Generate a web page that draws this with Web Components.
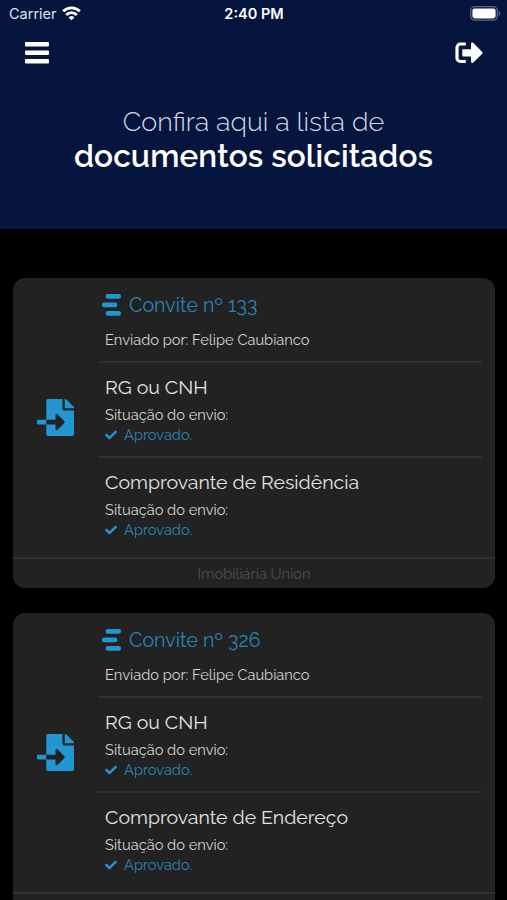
<!DOCTYPE html>
<html lang="pt-BR">
<head>
<meta charset="utf-8">
<meta name="viewport" content="width=device-width, initial-scale=1">
<title>Documentos solicitados</title>
<style>
    html, body{
        margin: 0;
        height: 900px;
        overflow: hidden;
        background-color: #000;
        font-family: Raleway, Lato, "Open Sans", sans-serif;
    }
</style>
</head>
<body>
    <app-tela>
        <barra-status slot="topo" hora="2:40 PM">Carrier</barra-status>
        <header-app slot="topo">
            Confira aqui a lista de
            <span slot="destaque">documentos solicitados</span>
        </header-app>

        <card-convite numero="133" remetente="Felipe Caubianco">
            <item-documento situacao="Aprovado.">RG ou CNH</item-documento>
            <item-documento situacao="Aprovado.">Comprovante de Residência</item-documento>
            <span slot="rodape">Imobiliária Union</span>
        </card-convite>

        <card-convite numero="326" remetente="Felipe Caubianco">
            <item-documento situacao="Aprovado.">RG ou CNH</item-documento>
            <item-documento situacao="Aprovado.">Comprovante de Endereço</item-documento>
        </card-convite>
    </app-tela>

<script>
class AppTela extends HTMLElement{
    constructor(){
        super();
        this.attachShadow({mode: 'open'});
        this.shadowRoot.innerHTML=`
            <div class="topo"><slot name="topo"></slot></div>
            <main><slot></slot></main>

            <style>
                :host{
                    display: block;
                    height: 900px;
                    overflow: hidden;
                }

                .topo{
                    height: 229px;
                    background-color: #05153d;
                }

                main{
                    display: flex;
                    flex-direction: column;
                    gap: 25px;
                    padding: 49px 12px 0 13px;
                }
            </style>
        `
    }
}

class BarraStatus extends HTMLElement{
    constructor(){
        super();
        this.attachShadow({mode: 'open'});
        this.shadowRoot.innerHTML=`
            <div class="operadora">
                <span class="nome"><slot></slot></span>
                <svg width="19" height="15" viewBox="0 0 19 15" fill="none" stroke="#fff" stroke-width="2.8">
                    <path d="M1.2 5.3a11.8 11.8 0 0 1 16.6 0"/>
                    <path d="M4.2 8.9a7.5 7.5 0 0 1 10.6 0"/>
                    <path d="M9.5 14.3L6.6 11.4a4.1 4.1 0 0 1 5.8 0z" fill="#fff" stroke="none"/>
                </svg>
            </div>
            <div class="hora">${this.getAttribute('hora')}</div>
            <div class="bateria">
                <svg width="31" height="15" viewBox="0 0 31 15">
                    <rect x=".7" y=".7" width="26.6" height="13.4" rx="4" fill="none" stroke="#62697f" stroke-width="1.3"/>
                    <rect x="2.4" y="2.4" width="23.2" height="10" rx="2.4" fill="#fff"/>
                    <path d="M28.8 5v5c1-.4 1.6-1.4 1.6-2.5S29.8 5.4 28.8 5z" fill="#62697f"/>
                </svg>
            </div>

            <style>
                :host{
                    display: grid;
                    grid-template-columns: 1fr auto 1fr;
                    align-items: center;
                    height: 27px;
                    padding: 0 6px 0 8px;
                    color: #fff;
                    font-family: Inter, sans-serif;
                    font-size: 14.5px;
                }

                .operadora{
                    display: flex;
                    align-items: center;
                    gap: 5px;
                    padding-left: 1px;
                    color: #dfe2ea;
                }

                .hora{
                    font-weight: 600;
                    margin-right: 1px;
                }

                .bateria{
                    display: flex;
                    justify-content: flex-end;
                }
            </style>
        `
    }
}

class HeaderApp extends HTMLElement{
    constructor(){
        super();
        this.attachShadow({mode: 'open'});
        this.shadowRoot.innerHTML=`
            <nav>
                <svg width="24" height="22" viewBox="0 0 24 22" fill="#fff">
                    <rect y="0" width="24" height="4.6" rx="1"/>
                    <rect y="8.5" width="24" height="4.6" rx="1"/>
                    <rect y="17" width="24" height="4.6" rx="1"/>
                </svg>
                <svg width="28" height="22" viewBox="0 0 28 22">
                    <path d="M10.8 2H5.5A3.5 3.5 0 0 0 2 5.5V16a3.5 3.5 0 0 0 3.5 3.5h5.3" fill="none" stroke="#fff" stroke-width="3.2"/>
                    <path d="M8.3 7.2H16V2c0-1.3 1.5-1.8 2.4-1L27 9.700c.7.7.7 1.5 0 2.200l-8.600 8.700c-.9.9-2.400.3-2.400-1v-5.200H8.300c-.6 0-1-.4-1-1V8.200c0-.6.4-1 1-1z" fill="#fff"/>
                </svg>
            </nav>
            <div class="titulo">
                <div class="leve"><slot></slot></div>
                <div class="forte"><slot name="destaque"></slot></div>
            </div>

            <style>
                :host{
                    display: block;
                    color: #fff;
                }

                nav{
                    display: flex;
                    justify-content: space-between;
                    padding: 15px 24px 0 25px;
                }

                svg{
                    display: block;
                }

                .titulo{
                    padding-top: 40px;
                    text-align: center;
                    line-height: 35px;
                    white-space: nowrap;
                }

                .leve{
                    font-size: 26.9px;
                    font-weight: 300;
                    color: #d5dae5;
                }

                .forte{
                    margin-top: -1px;
                    font-size: 31.5px;
                    font-weight: 600;
                    letter-spacing: .12px;
                }
            </style>
        `
    }
}

class CardConvite extends HTMLElement{
    constructor(){
        super();
        this.attachShadow({mode: 'open'});
        this.shadowRoot.innerHTML=`
            <div class="corpo">
                <svg class="arquivo" width="37" height="37" viewBox="0 0 512 512" fill="#2196d3">
                    <path d="M16 288c-8.800 0-16 7.200-16 16v32c0 8.800 7.200 16 16 16h112v-64H16zm489-183L407.100 7c-4.500-4.500-10.600-7-17-7H384v128h128v-6.100c0-6.300-2.500-12.400-7-16.900zm-153 31V0H152c-13.300 0-24 10.700-24 24v264h128v-65.200c0-14.300 17.300-21.400 27.400-11.300L379 308c6.600 6.700 6.600 17.400 0 24l-95.700 96.400c-10.100 10.100-27.400 3-27.400-11.300V352H128v136c0 13.300 10.700 24 24 24h336c13.300 0 24-10.700 24-24V160H376c-13.200 0-24-10.800-24-24z"/>
                </svg>
                <div class="conteudo">
                    <div class="cabecalho">
                        <div class="convite">
                            <svg width="20" height="22" viewBox="0 0 20 22" fill="#2196d3">
                                <rect x="3.7" width="15.3" height="4.8" rx="2"/>
                                <rect y="8.5" width="15.3" height="4.8" rx="2"/>
                                <rect x="3.7" y="17" width="15.3" height="4.8" rx="2"/>
                            </svg>
                            <span>Convite nº ${this.getAttribute('numero')}</span>
                        </div>
                        <div class="remetente">Enviado por: ${this.getAttribute('remetente')}</div>
                    </div>
                    <slot></slot>
                </div>
            </div>
            <footer><slot name="rodape"></slot></footer>

            <style>
                :host{
                    display: block;
                    height: 310px;
                    border-radius: 12px;
                    background-color: #222;
                    overflow: hidden;
                }

                .corpo{
                    display: grid;
                    grid-template-columns: 85px 1fr;
                    align-items: center;
                    height: 279px;
                    padding-right: 13px;
                }

                .arquivo{
                    display: block;
                    margin-left: 24px;
                }

                .conteudo{
                    height: 279px;
                }

                .cabecalho{
                    box-sizing: border-box;
                    height: 83px;
                    padding: 13px 0 0 4px;
                }

                .convite{
                    display: flex;
                    align-items: center;
                    gap: 7px;
                    height: 27px;
                    color: #2785b5;
                    font-size: 19.6px;
                }

                .convite span{
                    padding-top: 1px;
                }

                .remetente{
                    margin-top: 12px;
                    padding-left: 3px;
                    color: #d2d2d2;
                    font-size: 14.65px;
                    line-height: 20px;
                }

                footer{
                    height: 29px;
                    border-top: 2px solid #303030;
                    color: #4f4f4f;
                    font-size: 14.65px;
                    line-height: 29px;
                    text-align: center;
                }
            </style>
        `
    }
}

class ItemDocumento extends HTMLElement{
    constructor(){
        super();
        this.attachShadow({mode: 'open'});
        this.shadowRoot.innerHTML=`
            <div class="nome"><slot></slot></div>
            <div class="label">Situação do envio:</div>
            <div class="situacao">
                <svg width="12" height="12" viewBox="0 0 512 512" fill="#2196d3">
                    <path d="M173.900 439.400L7.500 273c-10-10-10-26.200 0-36.200l36.200-36.200c10-10 26.200-10 36.200 0L192 312.700 432.100 72.600c10-10 26.200-10 36.200 0l36.200 36.200c10 10 10 26.200 0 36.200L210.100 439.400c-10 10-26.200 10-36.200 0z"/>
                </svg>
                <span>${this.getAttribute('situacao')}</span>
            </div>

            <style>
                :host{
                    display: block;
                    box-sizing: border-box;
                    height: 95px;
                    padding: 13px 0 0 7px;
                    border-top: 2px solid #303030;
                }

                .nome{
                    color: #e2e2e2;
                    font-size: 19.5px;
                    line-height: 24px;
                }

                .label{
                    margin-top: 5px;
                    color: #d2d2d2;
                    font-size: 14.65px;
                    line-height: 20px;
                }

                .situacao{
                    display: flex;
                    align-items: center;
                    gap: 7px;
                    color: #2785b5;
                    font-size: 14.65px;
                    line-height: 20px;
                }
            </style>
        `
    }
}

customElements.define('app-tela', AppTela);
customElements.define('barra-status', BarraStatus);
customElements.define('header-app', HeaderApp);
customElements.define('card-convite', CardConvite);
customElements.define('item-documento', ItemDocumento);
</script>
</body>
</html>
